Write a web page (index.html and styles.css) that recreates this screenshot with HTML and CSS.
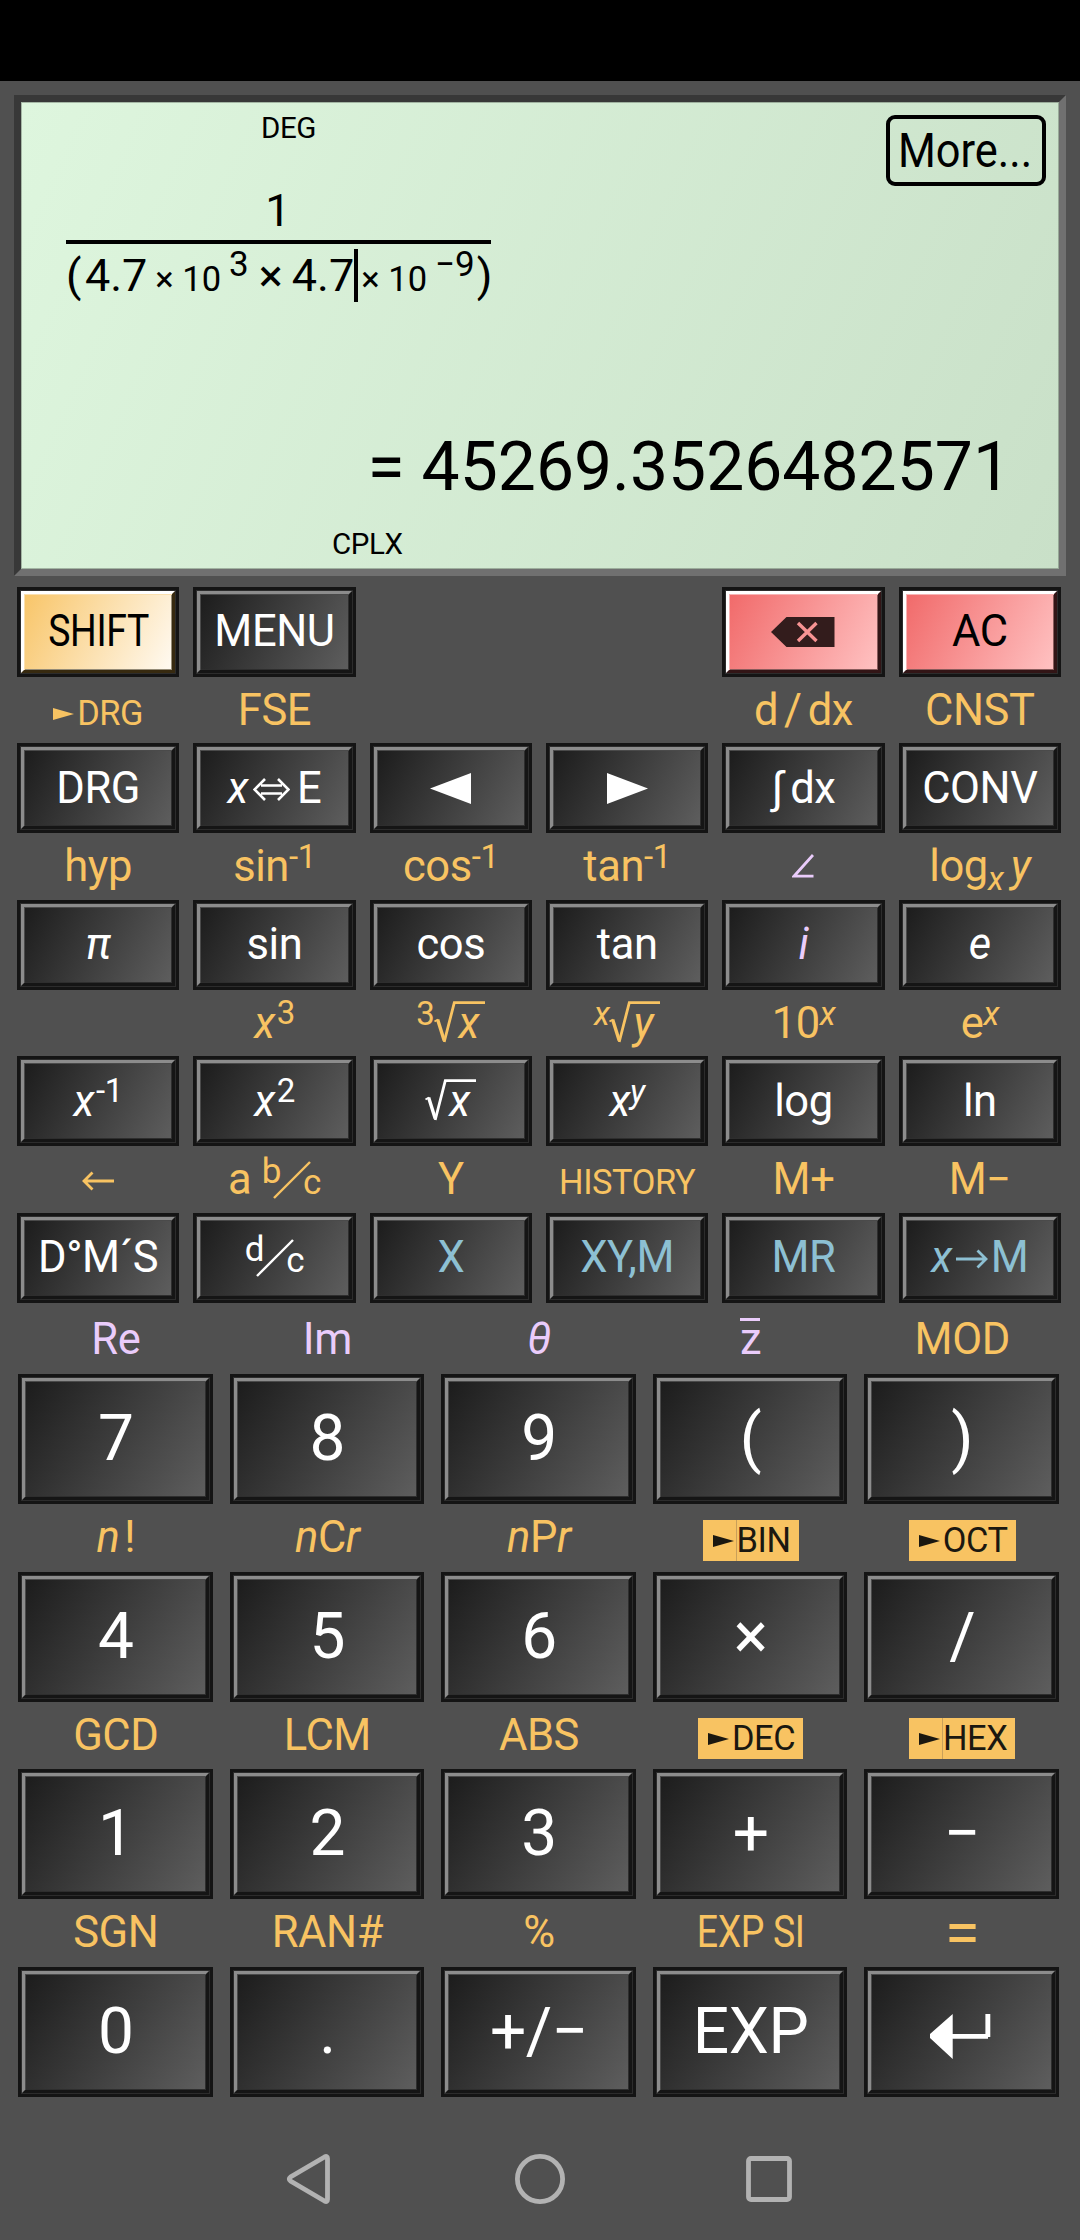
FILE: index.html
```html
<!DOCTYPE html>
<html lang="en">
  <head>
    <meta charset="UTF-8" />
    <title>Calculator</title>
    <link rel="stylesheet" href="styles.css">
  </head>
  <body>
    <svg class="defs">
      <symbol id="root" viewBox="0 0 51 42">
        <path d="M0.5 20.5L4 18.5" stroke-width="2" />
        <path d="M3.6 18.5L10.2 39.5" stroke-width="3.4" />
        <path d="M10.2 41L20.3 1.6H51" stroke-width="2.8" />
      </symbol>
      <symbol id="play" viewBox="0 0 21 12">
        <path d="M0 0L21 6L0 12z" fill="currentColor" stroke="none" />
      </symbol>
      <symbol id="slash" viewBox="0 0 38 38">
        <path d="M1 37L37 1" stroke-width="2.4" />
      </symbol>
    </svg>

    <div class="status-bar"></div>

    <div class="screen">
      <div class="screen-top">
        <span class="flag">DEG</span>
        <button class="more"><span>More...</span></button>
      </div>
      <div class="fraction">
        <div class="numerator">1</div>
        <div class="denominator"><span class="open">(</span>4.7<span class="ten">× 10</span><span class="power">3</span><span class="times">×</span>4.7<span class="cursor"></span><span class="ten after">× 10</span><span class="power">−9</span><span class="close">)</span></div>
      </div>
      <div class="result">= 45269.3526482571</div>
      <div class="flag mode">CPLX</div>
    </div>

    <div class="pad functions">
      <div class="cell"><button class="key shift"><span class="face"><span class="narrow">SHIFT</span></span></button></div>
      <div class="cell"><button class="key"><span class="face">MENU</span></button></div>
      <div class="cell"></div>
      <div class="cell"></div>
      <div class="cell"><button class="key red"><span class="face"><svg class="icon" width="64" height="30" viewBox="0 0 64 30"><path d="M0 15L15.5 0H63.5V30H15.5z" fill="#331c1c" stroke="none" /><path d="M27 6L45.5 24M45.5 6L27 24" stroke="#f79393" stroke-width="3.4" /></svg></span></button></div>
      <div class="cell"><button class="key red"><span class="face">AC</span></button></div>

      <div class="cell"><div class="label"><span class="small"><svg class="play" width="21" height="12"><use href="#play" /></svg>DRG</span></div><button class="key"><span class="face">DRG</span></button></div>
      <div class="cell"><div class="label">FSE</div><button class="key"><span class="face"><span><i>x</i><svg class="swap" width="37" height="23" viewBox="0 0 37 23"><path d="M8 7.5H29M8 15.5H29M12 1L1.5 11.5L12 22M25 1L35.5 11.5L25 22" stroke-width="2.6" /></svg>E</span></span></button></div>
      <div class="cell"><div class="label"></div><button class="key"><span class="face"><svg class="icon" width="41" height="31" viewBox="0 0 41 31"><path d="M0 15.5L41 0V31z" fill="#fff" stroke="none" /></svg></span></button></div>
      <div class="cell"><div class="label"></div><button class="key"><span class="face"><svg class="icon" width="41" height="31" viewBox="0 0 41 31"><path d="M41 15.5L0 0V31z" fill="#fff" stroke="none" /></svg></span></button></div>
      <div class="cell"><div class="label">d<span class="over">/</span>dx</div><button class="key"><span class="face"><span><span class="integral">∫</span>dx</span></span></button></div>
      <div class="cell"><div class="label">CNST</div><button class="key"><span class="face">CONV</span></button></div>

      <div class="cell"><div class="label">hyp</div><button class="key"><span class="face"><i>π</i></span></button></div>
      <div class="cell"><div class="label">sin<span class="sup">-1</span></div><button class="key"><span class="face">sin</span></button></div>
      <div class="cell"><div class="label">cos<span class="sup">-1</span></div><button class="key"><span class="face">cos</span></button></div>
      <div class="cell"><div class="label">tan<span class="sup">-1</span></div><button class="key"><span class="face">tan</span></button></div>
      <div class="cell"><div class="label purple"><svg class="angle" width="22" height="24" viewBox="0 0 22 24"><path d="M21 1L2 22.2H21.5" stroke-width="2.8" /></svg></div><button class="key"><span class="face purple"><i>i</i></span></button></div>
      <div class="cell"><div class="label">log<i class="sub">x</i> <i class="tight">y</i></div><button class="key"><span class="face"><i>e</i></span></button></div>

      <div class="cell"><div class="label"></div><button class="key"><span class="face"><span><i>x</i><span class="sup gap">-1</span></span></span></button></div>
      <div class="cell"><div class="label"><i>x</i><span class="sup gap">3</span></div><button class="key"><span class="face"><span><i>x</i><span class="sup gap">2</span></span></span></button></div>
      <div class="cell"><div class="label"><span class="sup">3</span><span class="root"><svg width="51" height="42"><use href="#root" /></svg><i>x</i></span></div><button class="key"><span class="face"><span class="root"><svg width="51" height="42"><use href="#root" /></svg><i>x</i></span></span></button></div>
      <div class="cell"><div class="label"><i class="sup">x</i><span class="root"><svg width="51" height="42"><use href="#root" /></svg><i>y</i></span></div><button class="key"><span class="face"><span><i>x</i><i class="sup">y</i></span></span></button></div>
      <div class="cell"><div class="label">10<i class="sup">x</i></div><button class="key"><span class="face">log</span></button></div>
      <div class="cell"><div class="label">e<i class="sup">x</i></div><button class="key"><span class="face">ln</span></button></div>

      <div class="cell"><div class="label"><svg class="arrow" width="32" height="20" viewBox="0 0 32 20"><path d="M32 10H2M10.500 1.500L2 10L10.500 18.500" stroke-width="2.8" /></svg></div><button class="key"><span class="face">D°M´S</span></button></div>
      <div class="cell"><div class="label">a <span class="upper">b</span><svg class="slash" width="38" height="38"><use href="#slash" /></svg><span class="lower">c</span></div><button class="key"><span class="face"><span><span class="upper">d</span><svg class="slash" width="38" height="38"><use href="#slash" /></svg><span class="lower">c</span></span></span></button></div>
      <div class="cell"><div class="label">Y</div><button class="key"><span class="face blue">X</span></button></div>
      <div class="cell"><div class="label"><span class="small">HISTORY</span></div><button class="key"><span class="face blue">XY,M</span></button></div>
      <div class="cell"><div class="label">M+</div><button class="key"><span class="face blue">MR</span></button></div>
      <div class="cell"><div class="label">M−</div><button class="key"><span class="face blue"><span><i>x</i><svg class="arrow to" width="32" height="20" viewBox="0 0 32 20"><path d="M0 10H30M21.500 1.500L30 10L21.500 18.500" stroke-width="2.8" /></svg>M</span></span></button></div>
    </div>

    <div class="pad numbers">
      <div class="cell"><div class="label purple">Re</div><button class="key"><span class="face">7</span></button></div>
      <div class="cell"><div class="label purple">Im</div><button class="key"><span class="face">8</span></button></div>
      <div class="cell"><div class="label purple"><i>θ</i></div><button class="key"><span class="face">9</span></button></div>
      <div class="cell"><div class="label purple"><span class="bar">z</span></div><button class="key"><span class="face">(</span></button></div>
      <div class="cell"><div class="label">MOD</div><button class="key"><span class="face">)</span></button></div>

      <div class="cell"><div class="label"><i>n</i><span class="fact">!</span></div><button class="key"><span class="face">4</span></button></div>
      <div class="cell"><div class="label"><i>n</i>C<i>r</i></div><button class="key"><span class="face">5</span></button></div>
      <div class="cell"><div class="label"><i>n</i>P<i>r</i></div><button class="key"><span class="face">6</span></button></div>
      <div class="cell"><div class="label"><span class="badge split"><svg class="play" width="21" height="12"><use href="#play" /></svg>BIN</span></div><button class="key"><span class="face">×</span></button></div>
      <div class="cell"><div class="label"><span class="badge"><svg class="play" width="21" height="12"><use href="#play" /></svg>OCT</span></div><button class="key"><span class="face">/</span></button></div>

      <div class="cell"><div class="label">GCD</div><button class="key"><span class="face">1</span></button></div>
      <div class="cell"><div class="label">LCM</div><button class="key"><span class="face">2</span></button></div>
      <div class="cell"><div class="label">ABS</div><button class="key"><span class="face">3</span></button></div>
      <div class="cell"><div class="label"><span class="badge"><svg class="play" width="21" height="12"><use href="#play" /></svg>DEC</span></div><button class="key"><span class="face">+</span></button></div>
      <div class="cell"><div class="label"><span class="badge split"><svg class="play" width="21" height="12"><use href="#play" /></svg>HEX</span></div><button class="key"><span class="face">−</span></button></div>

      <div class="cell"><div class="label">SGN</div><button class="key"><span class="face">0</span></button></div>
      <div class="cell"><div class="label">RAN#</div><button class="key"><span class="face">.</span></button></div>
      <div class="cell"><div class="label">%</div><button class="key"><span class="face">+/−</span></button></div>
      <div class="cell"><div class="label"><span class="narrow">EXP SI</span></div><button class="key"><span class="face">EXP</span></button></div>
      <div class="cell"><div class="label"><span class="equals">=</span></div><button class="key"><span class="face"><svg class="icon enter" width="61" height="45" viewBox="0 0 61 45"><path d="M0 20L22.700 0V20H55.400V0H60.300V23H58V24.800H22.700V45L0 24z" fill="#fff" stroke="none" /></svg></span></button></div>
    </div>

    <div class="nav">
      <svg width="50" height="50" viewBox="0 0 50 50"><path d="M43.500 4.500V45.500Q43.500 48.500 40.500 47L6.500 27Q4 25 6.500 23L40.500 3Q43.500 1.500 43.500 4.500z" /></svg>
      <svg width="50" height="50" viewBox="0 0 50 50"><circle cx="25" cy="25" r="22.600" /></svg>
      <svg width="50" height="50" viewBox="0 0 50 50"><rect x="2.500" y="4.500" width="41" height="41" rx="2.500" /></svg>
    </div>
  </body>
</html>
```
FILE: styles.css
```css
* {
  box-sizing: border-box;
}

body {
  margin: 0;
  width: 1080px;
  height: 2240px;
  overflow: hidden;
  background-color: #505050;
  font-family: Roboto, sans-serif;
}

svg {
  fill: none;
  stroke: currentColor;
}

.defs {
  display: none;
}

button {
  font: inherit;
  letter-spacing: inherit;
  margin: 0;
  padding: 0;
}

.status-bar {
  height: 81px;
  background-color: #000;
}

/* Screen */
.screen {
  width: 1052px;
  height: 481px;
  margin: 14px 0 11px 14px;
  border: 7px solid;
  border-color: #383838 #707070 #707070 #383838;
  background: linear-gradient(114.200deg, #def6de, #c9e0c8);
  box-shadow: inset 0 0 0 1px rgba(0, 0, 0, 0.25);
  color: #000;
}

.screen-top {
  display: flex;
  justify-content: space-between;
  align-items: flex-start;
  height: 82px;
  padding: 8px 13px 0 240px;
}

.flag {
  font-size: 29.500px;
  line-height: 36px;
  letter-spacing: -0.400px;
}

.more {
  width: 160px;
  height: 71px;
  margin-top: 5px;
  border: 4px solid #000;
  border-radius: 9px;
  background: none;
  color: #000;
  font-size: 49px;
  line-height: 62px;
}

.more span {
  display: block;
  margin: 0 -10px 0 -12px;
  transform: scaleX(0.885);
}

.fraction {
  width: 425px;
  margin-left: 45px;
  font-size: 45px;
}

.numerator {
  line-height: 53px;
  text-align: center;
  border-bottom: 4px solid #000;
  padding: 0 1px 3px 0;
}

.denominator {
  display: flex;
  height: 60px;
  padding-top: 4px;
  line-height: 56px;
  white-space: pre;
}

.denominator span {
  flex: none;
}

.open {
  margin-right: 3.500px;
}

.ten {
  margin-left: 8px;
  font-size: 34.500px;
  line-height: 62px;
}

.power {
  margin-left: 8px;
  font-size: 35px;
  line-height: 33px;
}

.times {
  margin: 0 9px 0 10px;
}

.cursor {
  width: 4px;
  height: 53px;
  margin-top: 1px;
  background-color: #000;
}

.ten.after {
  margin-left: 3px;
}

.close {
  margin-left: 2px;
}

.result {
  margin-top: 123px;
  padding-right: 48px;
  font-size: 67.800px;
  line-height: 80px;
  text-align: right;
}

.mode {
  margin: 18.500px 0 0 311px;
}

/* Keys */
.pad {
  display: grid;
  color: #f8c362;
  font-size: 43.500px;
  letter-spacing: -0.400px;
}

.functions {
  grid-template-columns: repeat(6, 1fr);
  column-gap: 14px;
  padding: 0 19px 0 17px;
}

.numbers {
  grid-template-columns: repeat(5, 1fr);
  column-gap: 17px;
  padding: 0 21px 0 18px;
  margin-top: 3.700px;
}

.cell {
  min-width: 0;
}

.label {
  height: 66.900px;
  line-height: 67px;
  text-align: center;
  white-space: nowrap;
}

.key {
  display: block;
  width: 100%;
  height: 89.600px;
  padding: 1px;
  border: 3px solid #141414;
  background-color: #2c2c2c;
  color: #fff;
}

.face {
  display: flex;
  justify-content: center;
  align-items: center;
  width: 100%;
  height: 100%;
  padding-top: 1px;
  border: 3px solid;
  border-color: #8c8c8c #151515 #151515 #8c8c8c;
  background: linear-gradient(117deg, #1c1c1c, #5e5e5e);
  box-shadow: inset 1px 1px 0 #4a4a4a, inset -1px -1px 0 #2e2e2e;
  line-height: 60px;
  white-space: nowrap;
}

.numbers .label {
  height: 67.700px;
  padding-left: 1px;
  line-height: 68px;
}

.numbers .key {
  height: 130px;
  font-size: 64px;
}

.numbers .face {
  padding: 0 0 0 1px;
  background-image: linear-gradient(122.600deg, #1c1c1c, #5e5e5e);
}

.shift,
.red {
  color: #000;
}

.shift .face {
  border-color: #fff #372a10 #372a10 #fff;
  background: linear-gradient(117deg, #f8c568, #fffaf2);
  box-shadow: inset 1px 1px 0 #fbe0ae, inset -1px -1px 0 #958c78;
}

.red .face {
  border-color: #fff #321516 #321516 #fff;
  background: linear-gradient(117deg, #f16a6a, #ffc2c2);
  box-shadow: inset 1px 1px 0 #f8b4b4, inset -1px -1px 0 #8a5c5c;
}

.purple {
  color: #eaccfb;
}

.blue {
  color: #8dc0d3;
}

/* Key legends */
.narrow {
  display: inline-block;
  transform: scaleX(0.860);
}

.small,
.badge {
  font-size: 34.400px;
}

.badge {
  display: inline-block;
  padding: 0 8px 0 10px;
  line-height: 41px;
  background-color: #f8c362;
  color: #1b1810;
}

.play {
  margin-right: 3px;
  vertical-align: 5px;
}

.badge.split {
  background-image: linear-gradient(#c9a05a, #c9a05a);
  background-repeat: no-repeat;
  background-size: 1px 100%;
  background-position: 33px 0;
}

.sup,
.sub,
.upper,
.lower {
  font-size: 33px;
  line-height: 0;
}

.sup {
  vertical-align: 13.500px;
}

.sup.gap {
  margin-left: 2px;
}

.sub {
  vertical-align: -9px;
}

.tight {
  margin-left: -3px;
}

.root {
  display: inline-block;
  position: relative;
  width: 51px;
  padding-left: 24px;
  text-align: left;
}

.root svg {
  position: absolute;
  left: 0;
  top: 11px;
}

.face .root svg {
  top: 7px;
}

.upper,
.lower {
  font-size: 35px;
}

.upper {
  vertical-align: 11px;
}

.slash {
  margin: 0 -8px;
  vertical-align: -5px;
}

.swap {
  margin: 0 7px 0 5px;
  vertical-align: 2px;
}

.over {
  margin: 0 6px;
}

.integral {
  margin-right: 8px;
}

.angle {
  vertical-align: 3px;
}

.arrow {
  vertical-align: 3px;
}

.arrow.to {
  margin: 0 3px 0 4px;
}

.bar {
  position: relative;
}

.bar::before {
  content: "";
  position: absolute;
  left: 0;
  top: 4px;
  width: 20px;
  height: 3px;
  background-color: currentColor;
}

.fact {
  margin-left: 5px;
}

.equals {
  font-size: 64px;
  line-height: 0;
  vertical-align: -8px;
}

.enter {
  margin: 9px 4px 0 0;
}

/* Navigation bar */
.nav {
  display: flex;
  justify-content: center;
  gap: 181px;
  margin-top: 57px;
  color: #b2b2b2;
  stroke-width: 4.800;
}
```
